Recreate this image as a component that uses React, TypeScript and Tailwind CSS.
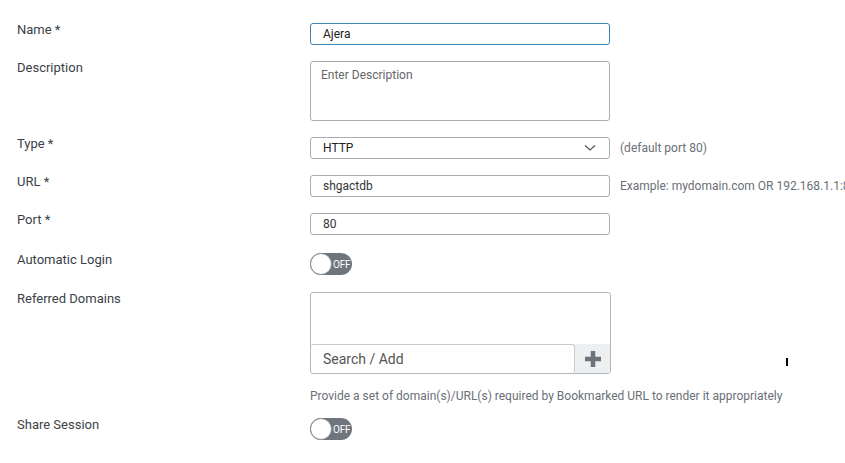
import React from "react";

interface RowProps {
  label: string;
  children: React.ReactNode;
}

function Row({ label, children }: RowProps) {
  return (
    <div className="flex items-start">
      <label className="w-[293px] shrink-0 text-[13px] leading-[14px] text-[#3b3f47]">
        {label}
      </label>
      {children}
    </div>
  );
}

function Toggle() {
  return (
    <div className="relative flex h-[22px] w-[42px] items-center rounded-full bg-[#6f757c]">
      <div className="h-[22px] w-[22px] rounded-full border border-[#8a9096] bg-white" />
      <span className="ml-[1px] text-[10px] tracking-tight text-white">OFF</span>
    </div>
  );
}

const inputCls =
  "h-[22px] w-[300px] rounded-[3px] border border-[#a9acb0] bg-white px-3 text-[12px] text-[#333] outline-none";

export default function App() {
  return (
    <div
      className="relative h-[463px] w-[845px] overflow-hidden bg-white pl-[17px] pt-[23px]"
      style={{ fontFamily: "Roboto, 'Noto Sans', sans-serif" }}
    >
      <div className="flex flex-col gap-4">
        <Row label="Name *">
          <input
            className="h-[22px] w-[300px] rounded-[3px] border border-[#3d86b8] bg-white px-3 text-[12px] text-[#222] outline-none"
            defaultValue="Ajera"
          />
        </Row>
        <Row label="Description">
          <textarea
            className="h-[60px] w-[300px] resize-none rounded-[3px] border border-[#a9acb0] bg-white px-[10px] py-[4px] text-[12px] text-[#333] outline-none placeholder:text-[#666]"
            placeholder="Enter Description"
          />
        </Row>
        <Row label="Type *">
          <div className="flex items-center">
            <div className="flex h-[22px] w-[300px] items-center justify-between rounded-[3px] border border-[#a9acb0] px-3 text-[12px] text-[#222]">
              <span>HTTP</span>
              <svg width="12" height="8" viewBox="0 0 12 8" className="mr-[1px]">
                <path d="M1 1.5 L6 6 L11 1.5" fill="none" stroke="#555" strokeWidth="1.2" />
              </svg>
            </div>
            <span className="ml-[10px] text-[12px] text-[#6b6f76]">(default port 80)</span>
          </div>
        </Row>
        <Row label="URL *">
          <div className="flex items-center">
            <input className={inputCls} defaultValue="shgactdb" />
            <span className="ml-[10px] whitespace-nowrap text-[12px] text-[#6b6f76]">
              Example: mydomain.com OR 192.168.1.1:80
            </span>
          </div>
        </Row>
        <Row label="Port *">
          <input className={inputCls} defaultValue="80" />
        </Row>
        <div className="mt-[2px]">
          <Row label="Automatic Login">
            <Toggle />
          </Row>
        </div>
        <div className="mt-[1px]">
          <Row label="Referred Domains">
            <div className="flex flex-col">
              <div className="flex h-[82px] w-[301px] flex-col justify-end rounded-[3px] border border-[#b5b8bb] bg-white">
                <div className="flex h-[29px]">
                  <div className="flex flex-1 items-center rounded-[3px] border-t border-r border-[#c8cacd] px-3 text-[14px] text-[#555]">
                    Search / Add
                  </div>
                  <div className="flex w-[35px] items-center justify-center bg-[#eeeff0]">
                    <svg width="18" height="18" viewBox="0 0 18 18">
                      <path d="M9 1 V17 M1 9 H17" stroke="#6c737b" strokeWidth="4.5" />
                    </svg>
                  </div>
                </div>
              </div>
              <p className="mt-[15px] whitespace-nowrap text-[12px] leading-[15px] text-[#6b6f76]">
                Provide a set of domain(s)/URL(s) required by Bookmarked URL to render it appropriately
              </p>
            </div>
          </Row>
        </div>
        <div className="-mt-[2px]">
          <Row label="Share Session">
            <Toggle />
          </Row>
        </div>
      </div>
      <div className="absolute left-[786px] top-[358px] h-[8px] w-[2px] bg-black" />
    </div>
  );
}
